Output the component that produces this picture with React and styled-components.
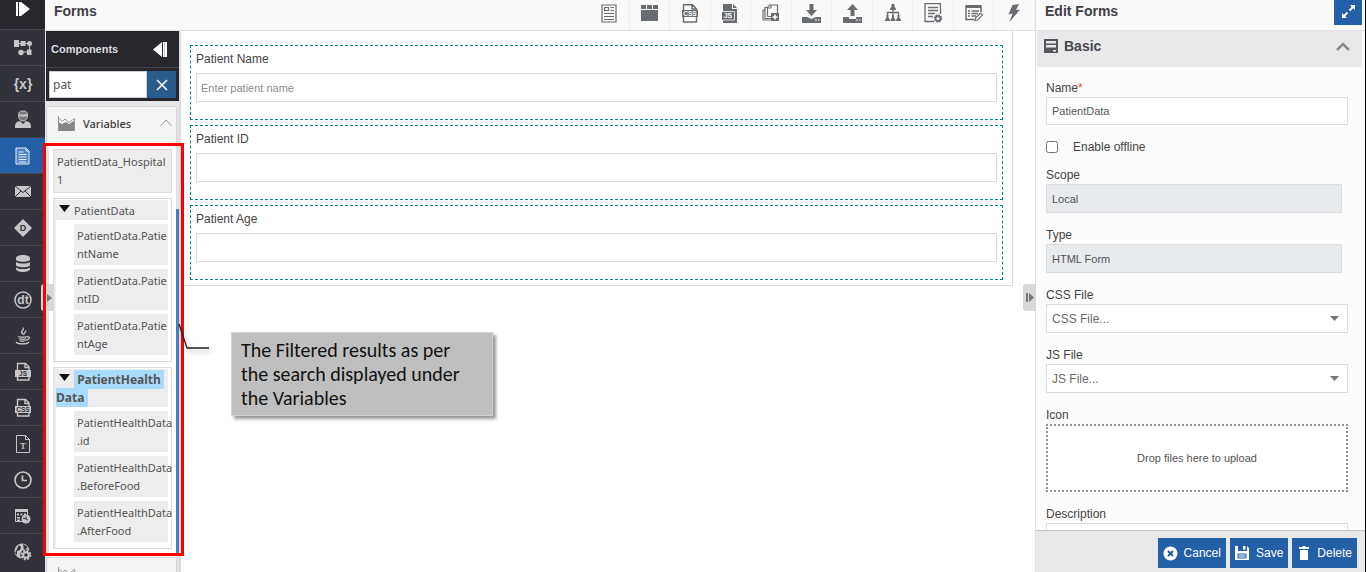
import { useState } from "react";
import styled, { createGlobalStyle, css } from "styled-components";

const GlobalStyle = createGlobalStyle`
  *, *::before, *::after {
    box-sizing: border-box;
  }

  body {
    margin: 0;
    overflow: hidden;
    background: #fff;
    color: #444;
    font-family: "Liberation Sans", Arial, sans-serif;
    font-size: 12px;
  }

  button, input, select {
    font-family: inherit;
    margin: 0;
  }
`;

const Page = styled.div`
  position: relative;
  display: flex;
  height: 100vh;
  overflow: hidden;
  border-right: 1px solid #000;
`;

/* Left rail */

const Rail = styled.nav`
  flex: none;
  width: 45px;
  background: #32323a;
`;

const RailButton = styled.button`
  display: flex;
  align-items: center;
  justify-content: center;
  width: 100%;
  height: 36px;
  padding: 0;
  border: 0;
  border-top: 1px solid #45454c;
  background: ${(props) => (props.$active ? "#2460a7" : "transparent")};
  color: #c6c6c8;
`;

const RailToggle = styled(RailButton)`
  height: 29px;
  padding-bottom: 12px;
  border-top: 0;
  background: #28272e;
  color: #fff;
`;

/* Middle */

const Main = styled.main`
  display: flex;
  flex: 1;
  flex-direction: column;
  min-width: 0;
`;

const Header = styled.header`
  display: flex;
  flex: none;
  justify-content: space-between;
  height: 31px;
  border-bottom: 1px solid #e2e2e4;
  background: #fafafa;
`;

const Title = styled.h1`
  margin: 0;
  padding: 3px 9px;
  font-size: 14px;
  line-height: 16px;
  color: #3f3f46;
`;

const Toolbar = styled.div`
  display: flex;
  width: 446px;
`;

const ToolButton = styled.button`
  display: flex;
  flex: 1;
  align-items: center;
  justify-content: center;
  padding: 0 0 4px;
  border: 0;
  border-right: 1px solid #f0f0f2;
  background: transparent;
  color: #696c71;
`;

const Workspace = styled.div`
  display: flex;
  flex: 1;
  min-height: 0;
`;

/* Components panel */

const Components = styled.aside`
  display: flex;
  flex: none;
  flex-direction: column;
  width: 136px;
  padding-left: 1px;
  border-right: 2px solid #dcdcdc;
  background: #e6e6e6;
`;

const PanelHead = styled.div`
  display: flex;
  flex: none;
  align-items: center;
  justify-content: space-between;
  height: 36px;
  padding: 0 12px 0 5px;
  background: #28272e;
  color: #dcdce0;
  font-size: 11px;
  font-weight: bold;
`;

const PlainButton = styled.button`
  display: flex;
  padding: 0;
  border: 0;
  background: transparent;
  color: inherit;
`;

const Search = styled.div`
  display: flex;
  flex: none;
  height: 34px;
  padding: 3px;
  border-top: 1px solid #45454c;
  background: #28272e;

  input {
    flex: 1;
    min-width: 0;
    padding: 0 3px;
    border: 1px solid #ccc;
    border-radius: 0;
    outline: 0;
    background: #fff;
    color: #555;
    font-family: "Noto Sans", sans-serif;
    font-size: 12px;
  }

  button {
    display: flex;
    align-items: center;
    justify-content: center;
    width: 29px;
    padding: 0;
    border: 0;
    background: #2b5d8c;
    color: #fff;
  }
`;

const Accordion = styled.div`
  position: relative;
  display: flex;
  flex: 1;
  flex-direction: column;
  min-height: 0;
  padding-top: 5px;
  overflow: hidden;
`;

const AccordionHead = styled.button`
  && {
    margin-right: 2px;
  }

  display: flex;
  flex: none;
  align-items: center;
  gap: 8px;
  height: 38px;
  padding: 0 4px 4px 11px;
  border: 1px solid #d5d5d5;
  border-radius: 2px;
  background: #f4f4f4;
  color: #3c3c3c;
  font-family: "Noto Sans", sans-serif;
  font-size: 11px;
  font-weight: 500;

  span {
    flex: 1;
    text-align: left;
  }
`;

const Results = styled.div`
  display: flex;
  flex: none;
  flex-direction: column;
  gap: 5px;
  margin-right: 2px;
  margin-left: 3px;
  padding: 5px 4px 8px;
  border-right: 1px solid #ddd;
  background: #fff;
  color: #555;
  font-family: "Noto Sans", sans-serif;
  font-size: 11px;
  line-height: 18px;
`;

const Variable = styled.div`
  padding: 3px;
  border: 1px solid #dcdcdc;
  background: #ededed;
  overflow-wrap: anywhere;
`;

const Group = styled.section`
  padding: 1px 3px 2px 2px;
  border: 1px solid #dcdcdc;
  background: linear-gradient(to right, #ededed 2px, #fff 2px);
`;

const GroupName = styled.div`
  padding: 2px 0 0;
  background: #ededed;

  svg {
    margin-right: 4px;
    margin-left: 3px;
    vertical-align: 3px;
  }
`;

const Mark = styled.mark`
  padding: 1px 4px 1px 0;
  background: #a9dbfd;
  color: #555;
  font-size: 12px;
  font-weight: bold;
  white-space: pre-wrap;
`;

const Child = styled.div`
  margin: 4px 0 4px 18px;
  padding: 3px 0 2px 3px;
  background: #ededed;
`;

const ScrollThumb = styled.div`
  position: absolute;
  top: 108px;
  right: 0;
  bottom: 17px;
  width: 3px;
  background: #4a7ebf;
`;

/* Form canvas */

const Canvas = styled.div`
  display: flex;
  flex: 1;
  flex-direction: column;
  align-self: flex-start;
  gap: 5px;
  margin-right: 22px;
  padding: 14px 9px 5px;
  border: 1px solid #dcdcdc;
  border-top: 0;
  border-left: 0;
`;

const FormField = styled.div`
  display: flex;
  flex-direction: column;
  height: 75px;
  padding: 5px;
  border: 1px dashed #0b858c;

  label {
    margin-bottom: 6px;
    line-height: 16px;
  }

  input {
    height: 29px;
    padding: 0 4px;
    border: 1px solid #dcdcdc;
    outline: 0;
    font-size: 11px;
  }

  input::placeholder {
    color: #8b8b8b;
  }
`;

/* Properties panel */

const Properties = styled.aside`
  display: flex;
  flex: none;
  flex-direction: column;
  width: 330px;
  border-left: 1px solid #dedee0;
  background: #fcfcfc;
`;

const ExpandButton = styled.button`
  && {
    margin-right: 3px;
  }

  display: flex;
  align-items: center;
  justify-content: center;
  width: 28px;
  height: 25px;
  padding: 0 0 3px;
  border: 0;
  background: #2460a7;
  color: #fff;
`;

const SectionHead = styled.button`
  && {
    margin: 0 3px 0 1px;
  }

  display: flex;
  flex: none;
  align-items: center;
  gap: 6px;
  height: 36px;
  padding: 0 12px 6px 7px;
  border: 0;
  background: #e9e9eb;
  color: #484850;
  font-size: 14px;
  font-weight: bold;

  span {
    flex: 1;
    text-align: left;
  }
`;

const Fields = styled.form`
  display: flex;
  flex: 1;
  flex-direction: column;
  gap: 14px;
  min-height: 0;
  padding: 13px 17px 0 10px;
  overflow: hidden;
`;

const controlStyle = css`
  width: 100%;
  height: 29px;
  border: 1px solid #dcdcde;
  border-radius: 0;
  outline: 0;
  color: #555;
`;

const Field = styled.div`
  flex: none;

  label {
    display: block;
    margin-bottom: 1px;
    line-height: 16px;
  }
`;

const Required = styled.span`
  color: #f33;
`;

const TextInput = styled.input`
  ${controlStyle}
  height: 28px;
  padding: 0 5px;
  background: #fff;
  font-size: 11px;
`;

const LockedField = styled(Field)`
  padding-right: 6px;

  input {
    height: 29px;
    background: #e8ebee;
  }
`;

const CheckRow = styled.div`
  display: flex;
  flex: none;
  align-items: center;
  gap: 15px;
  height: 16px;
  margin-bottom: -2px;

  input {
    width: 12px;
    height: 12px;
  }
`;

const SelectBox = styled.div`
  position: relative;

  select {
    ${controlStyle}
    padding: 0 5px;
    appearance: none;
    background: #fff;
    color: #6b6b6b;
    font-size: 12px;
  }

  svg {
    position: absolute;
    top: 12px;
    right: 9px;
    pointer-events: none;
  }
`;

const DropZone = styled.button`
  width: 100%;
  height: 68px;
  border: 2px dotted #929292;
  background: #fff;
  color: #555;
  font-size: 11px;
`;

const Footer = styled.footer`
  display: flex;
  flex: none;
  justify-content: flex-end;
  gap: 4px;
  height: 42px;
  padding: 7px 8px 0 0;
  border-top: 1px solid #c2c2c6;
  background: #e9e9eb;
`;

const ActionButton = styled.button`
  display: flex;
  align-items: center;
  gap: 6px;
  height: 30px;
  padding: 0 5px;
  border: 0;
  background: #2460a7;
  color: #fff;
  font-size: 12px;
`;

/* Things that lie over the page */

const Handle = styled.button`
  position: absolute;
  top: 284px;
  display: flex;
  align-items: center;
  justify-content: center;
  width: 13px;
  height: 27px;
  padding: 0;
  border: 0;
  border-radius: 3px 0 0 3px;
  background: #d8d8d8;
  color: #777;
  ${(props) =>
    props.$right ? "right: 329px;" : "left: 41px; padding-left: 4px;"}
`;

const Outline = styled.div`
  position: absolute;
  top: 143px;
  bottom: 16px;
  left: 43px;
  width: 141px;
  border: 3px solid #f00;
  pointer-events: none;
`;

const Leader = styled.svg`
  position: absolute;
  top: 322px;
  left: 178px;
  filter: drop-shadow(2px 3px 2px rgba(0, 0, 0, 0.3));
`;

const Callout = styled.p`
  position: absolute;
  top: 332px;
  left: 231px;
  width: 262px;
  margin: 0;
  padding: 5px 24px 5px 9px;
  border: 1px solid #d0d0d0;
  background: #bfbfbf;
  box-shadow: 3px 3px 3px rgba(0, 0, 0, 0.4);
  color: #111;
  font-family: Carlito, Lato, sans-serif;
  font-size: 20px;
  line-height: 24px;
`;

function Icon({ w = 18, h = w, children }) {
  return (
    <svg
      width={w}
      height={h}
      viewBox={`0 0 ${w} ${h}`}
      fill="currentColor"
      aria-hidden="true"
    >
      {children}
    </svg>
  );
}

function FileIcon({ text }) {
  return (
    <Icon w={16} h={20}>
      <path
        d="M2.500 8V1.500h8l3.500 3.500v3M2.500 14.500v3.500h11.500v-3.500M10 1.500V5.500h4"
        fill="none"
        stroke="currentColor"
        strokeWidth="1.400"
      />
      <path d="M0 8h16v7H0z" />
      <text
        x="8"
        y="14"
        textAnchor="middle"
        fontSize="6.500"
        fontWeight="bold"
        fill="#32323a"
      >
        {text}
      </text>
    </Icon>
  );
}

const railItems = [
  {
    name: "Workflow",
    icon: (
      <Icon w={18} h={16}>
        <path d="M0 0h5v7H0zM6.500 1h5v5h-5zM13 9.500h4.500V15H13z" />
        <circle cx="15.500" cy="3.500" r="2.500" />
        <circle cx="7" cy="12.500" r="2.700" />
        <path
          d="M4 3.500h11M15.500 4v8H7"
          fill="none"
          stroke="currentColor"
        />
      </Icon>
    ),
  },
  {
    name: "Variables",
    icon: (
      <Icon w={20} h={18}>
        <text x="10" y="14" textAnchor="middle" fontSize="14" fontWeight="bold">
          {"{x}"}
        </text>
      </Icon>
    ),
  },
  {
    name: "Users",
    icon: (
      <Icon w={18} h={19}>
        <path d="M1 18c0-5 1-6 5-7l3 3 3-3c4 1 5 2 5 7z" />
        <path
          d="M4.500 5.500C4.500 2 6 1 9 1s4.500 1 4.500 4.500S11.500 11 9 11 4.500 9 4.500 5.500z"
          fill="#77777c"
          stroke="currentColor"
        />
        <path d="M5 4c2 1 5 1 8 0v2c-3 1-6 1-8 0z" />
      </Icon>
    ),
  },
  {
    name: "Forms",
    active: true,
    icon: (
      <Icon w={16} h={18}>
        <path
          d="M1 1h10l3 3v13H1zM11 1v3h3M3.500 5h5M3.500 7.500h8M3.500 10h8M3.500 12.500h8M3.500 15h8"
          fill="#4d83c2"
          stroke="#e5edf7"
        />
      </Icon>
    ),
  },
  {
    name: "Email",
    icon: (
      <Icon w={16} h={11}>
        <path d="M0 0h16v11H0z" />
        <path
          d="M0 0l8 6.500L16 0M0 11l6-6M16 11l-6-6"
          fill="none"
          stroke="#32323a"
        />
      </Icon>
    ),
  },
  {
    name: "Decisions",
    icon: (
      <Icon w={18}>
        <path d="M9 0l9 9-9 9-9-9z" />
        <text
          x="9"
          y="12"
          textAnchor="middle"
          fontSize="9"
          fontWeight="bold"
          fill="#32323a"
        >
          D
        </text>
      </Icon>
    ),
  },
  {
    name: "Database",
    icon: (
      <Icon w={16} h={17}>
        <path d="M1 3c0-4 14-4 14 0v1.500c0 3-14 3-14 0zM1 7c3 2 11 2 14 0v3c0 3-14 3-14 0zM1 12.500c3 2 11 2 14 0V14c0 4-14 4-14 0z" />
      </Icon>
    ),
  },
  {
    name: "Data tables",
    icon: (
      <Icon w={18}>
        <circle
          cx="9"
          cy="9"
          r="8"
          fill="none"
          stroke="currentColor"
          strokeWidth="1.500"
        />
        <text x="9" y="13" textAnchor="middle" fontSize="12" fontWeight="bold">
          dt
        </text>
      </Icon>
    ),
  },
  {
    name: "Java",
    icon: (
      <Icon w={16} h={18}>
        <path
          d="M8 7C4 4.500 10 3.500 8 .5M9 8c-1.500-2 3-3 1.500-4.500M3 9.500c2 1 7 1 9 0M12 10c4-1 2.500 3-1 3M4 11.500c2 1 5 1 7 0M4.500 13.500c2 1 4 1 6 0M1 15c2 2.500 11 2.500 13 0"
          fill="none"
          stroke="currentColor"
          strokeWidth="1.300"
        />
      </Icon>
    ),
  },
  { name: "Script files", icon: <FileIcon text="JS" /> },
  { name: "Style files", icon: <FileIcon text="CSS" /> },
  {
    name: "Text files",
    icon: (
      <Icon w={14} h={18}>
        <path
          d="M.5.5h9l4 4v13H.5zM9.500.500v4h4"
          fill="none"
          stroke="currentColor"
        />
        <text
          x="7"
          y="14"
          textAnchor="middle"
          fontSize="9"
          fontWeight="bold"
          fontFamily="Liberation Serif"
        >
          T
        </text>
      </Icon>
    ),
  },
  {
    name: "Schedules",
    icon: (
      <Icon w={18}>
        <path
          d="M9 1a8 8 0 100 16A8 8 0 009 1zM8.500 4.500v5H13"
          fill="none"
          stroke="currentColor"
          strokeWidth="1.700"
        />
      </Icon>
    ),
  },
  {
    name: "Calendar",
    icon: (
      <Icon w={16} h={16}>
        <path
          d="M.5 1.500h12v12H.5z"
          fill="none"
          stroke="currentColor"
        />
        <path d="M0 1h13v3H0zM2 5.500h2v2H2zM5.500 5.500h2v2h-2zM9 5.500h2v2H9zM2 9h3v1.500H2zM2 11.500h3V13H2z" />
        <circle cx="11" cy="11" r="4.500" />
        <path d="M11 8.500V11l2 1M8 10l3 1" fill="none" stroke="#32323a" />
      </Icon>
    ),
  },
  {
    name: "Global settings",
    icon: (
      <Icon w={18} h={18}>
        <circle cx="8" cy="8" r="7.500" />
        <path d="M5 2l2 2-1 3-3 1v4l-2-2M9 1l5 3-4 3" fill="#32323a" />
        <circle cx="12" cy="12" r="5.800" fill="#32323a" />
        <circle
          cx="12"
          cy="12"
          r="4.300"
          fill="none"
          stroke="currentColor"
          strokeWidth="2"
          strokeDasharray="2 1.377"
        />
        <circle
          cx="12"
          cy="12"
          r="2.800"
          fill="none"
          stroke="currentColor"
          strokeWidth="2"
        />
      </Icon>
    ),
  },
];

const tools = [
  {
    name: "Layout",
    icon: (
      <Icon w={16} h={19}>
        <path
          d="M1 1h14v17H1zM3.500 3.500h4v3h-4zM9.500 3.500H13M9.500 6.500H13M3 9.500h10M3 12.500h10M3 15.500h10"
          fill="none"
          stroke="currentColor"
          strokeWidth="1.200"
        />
      </Icon>
    ),
  },
  {
    name: "Containers",
    icon: (
      <Icon w={17} h={16}>
        <path d="M0 5h17v11H0zM0 0h5v4H0zM6 0h5v4H6zM12 0h5v4h-5z" />
      </Icon>
    ),
  },
  {
    name: "CSS",
    icon: (
      <Icon w={16} h={19}>
        <path
          d="M1.500 6V.7h9L14.500 5v2M1.500 13v5h13v-5M10 1v4h4"
          fill="none"
          stroke="currentColor"
          strokeWidth="1.400"
        />
        <path d="M0 6h16v7H0z" />
        <text
          x="8"
          y="12"
          textAnchor="middle"
          fontSize="6.500"
          fontWeight="bold"
          fill="#fff"
        >
          CSS
        </text>
      </Icon>
    ),
  },
  {
    name: "JavaScript",
    icon: (
      <Icon w={16} h={19}>
        <path d="M1 0h9v5h5v14H1v-3h10V8H1zM11 0l4 4h-4z" />
        <path d="M0 8h12v8H0z" />
        <path
          d="M1 7.500h11.500v8.500H1"
          fill="none"
          stroke="#fafafa"
          strokeWidth=".8"
        />
        <text
          x="6"
          y="14"
          textAnchor="middle"
          fontSize="7"
          fontWeight="bold"
          fill="#fff"
        >
          JS
        </text>
      </Icon>
    ),
  },
  {
    name: "Add page",
    icon: (
      <Icon w={18} h={18}>
        <path
          d="M5.500 12.500v-9l2-2.500h8v8M5 3.500H3v11h8M3 6H1v10h9M5.500 12.500h5M6 4h3V1"
          fill="none"
          stroke="currentColor"
          strokeWidth="1.200"
        />
        <path d="M9 9h8v8H9z" />
        <path d="M13 10.500v5M10.500 13h5" stroke="#fff" strokeWidth="1.500" />
      </Icon>
    ),
  },
  {
    name: "Import",
    icon: (
      <Icon w={19} h={19}>
        <path d="M7.500 0h4v6h3.500l-5.500 6L4 6h3.500zM0 13h5l4.500 2 4.500-2h5v6H0z" />
        <path d="M13 16h2M16 16h1.500" stroke="#fff" />
      </Icon>
    ),
  },
  {
    name: "Export",
    icon: (
      <Icon w={19} h={19}>
        <path d="M7.500 12h4V6H15L9.500 0 4 6h3.500zM0 13h6v2h7v-2h6v6H0z" />
        <path d="M13 16h2M16 16h1.500" stroke="#fff" />
      </Icon>
    ),
  },
  {
    name: "Hierarchy",
    icon: (
      <Icon w={16} h={18}>
        <path d="M6.500 0h3v2.500L11 5v1H5V5l1.500-2.500zM1.500 11h2v2.500L5 16v1H0v-1l1.500-2.500zM7 11h2v2.500l1.500 2.500v1h-5v-1L7 13.500zM12.500 11h2v2.500L16 16v1h-5v-1l1.500-2.500z" />
        <path
          d="M8 5v7M2.500 12V8.500h11V12"
          fill="none"
          stroke="currentColor"
          strokeWidth="1.300"
        />
      </Icon>
    ),
  },
  {
    name: "Form settings",
    icon: (
      <Icon w={19} h={20}>
        <path
          d="M10 18.500H1V.7h15.500V11M4 4.500h10M4 7.500h10M4 10.500h7M4 13.500h5"
          fill="none"
          stroke="currentColor"
          strokeWidth="1.300"
        />
        <circle
          cx="14"
          cy="15.500"
          r="2.500"
          fill="none"
          stroke="currentColor"
          strokeWidth="1.800"
        />
        <circle
          cx="14"
          cy="15.500"
          r="3.700"
          fill="none"
          stroke="currentColor"
          strokeWidth="1.200"
          strokeDasharray="1.500 1.400"
        />
      </Icon>
    ),
  },
  {
    name: "Edit rules",
    icon: (
      <Icon w={18} h={17}>
        <path
          d="M9 14.500H1V1h15v6M3 6h2M6.500 6H14M3 8.500h2M6.500 8.500H13M3 11h2M6.500 11H11"
          fill="none"
          stroke="currentColor"
          strokeWidth="1.500"
        />
        <path d="M1 0h15v3H1z" />
        <path
          d="M10 15.500l.5-2.500 5-5 2 2-5 5z"
          fill="#fafafa"
          stroke="currentColor"
          strokeWidth="1.200"
        />
      </Icon>
    ),
  },
  {
    name: "Events",
    icon: (
      <Icon w={12} h={18}>
        <path d="M4.500 1L11 0 8 6l4-.5L1.500 18l3-8.500-4 1z" />
      </Icon>
    ),
  },
];

const groups = [
  {
    name: "PatientData",
    children: [
      ["PatientData.Patie", "ntName"],
      ["PatientData.Patie", "ntID"],
      ["PatientData.Patie", "ntAge"],
    ],
  },
  {
    name: "PatientHealth Data",
    highlighted: true,
    children: [
      ["PatientHealthData", ".id"],
      ["PatientHealthData", ".BeforeFood"],
      ["PatientHealthData", ".AfterFood"],
    ],
  },
];

const formFields = [
  { id: "patient-name", label: "Patient Name", hint: "Enter patient name" },
  { id: "patient-id", label: "Patient ID" },
  { id: "patient-age", label: "Patient Age" },
];

function ChartIcon() {
  return (
    <Icon w={17} h={15}>
      <path d="M0 15V6l4 2 4-2 3 2 5-3 1 0v10z" fill="#858585" />
      <path
        d="M.5 15V0M.5 2l4 3.500L7 3l4 3.500 5.500-4V15"
        fill="none"
        stroke="#999"
      />
    </Icon>
  );
}

function VariableGroup({ group }) {
  return (
    <Group>
      <GroupName>
        <Icon w={11} h={7}>
          <path d="M0 0h11L5.500 7z" fill="#111" />
        </Icon>
        {group.highlighted ? <Mark> {group.name}</Mark> : group.name}
      </GroupName>
      {group.children.map(([first, rest]) => (
        <Child key={rest}>
          {first}
          <br />
          {rest}
        </Child>
      ))}
    </Group>
  );
}

function ComponentsPanel() {
  const [query, setQuery] = useState("pat");

  return (
    <Components>
      <PanelHead>
        Components
        <PlainButton aria-label="Collapse components">
          <Icon w={14} h={15}>
            <path d="M9 0v15L0 7.500zM10 0h4v15h-4z" fill="#fff" />
            <path d="M11.500 0v15" stroke="#8d8d92" strokeWidth=".5" />
          </Icon>
        </PlainButton>
      </PanelHead>
      <Search>
        <input
          aria-label="Search components"
          value={query}
          onChange={(e) => setQuery(e.target.value)}
        />
        <button aria-label="Clear search" onClick={() => setQuery("")}>
          <Icon w={12}>
            <path d="M1 1l10 10M11 1L1 11" stroke="#fff" strokeWidth="1.500" />
          </Icon>
        </button>
      </Search>
      <Accordion>
        <AccordionHead>
          <ChartIcon />
          <span>Variables</span>
          <Icon w={12} h={8}>
            <path d="M.5 7L6 1l5.500 6" fill="none" stroke="#999" />
          </Icon>
        </AccordionHead>
        <Results>
          <Variable>PatientData_Hospital1</Variable>
          {groups.map((group) => (
            <VariableGroup key={group.name} group={group} />
          ))}
        </Results>
        <AccordionHead aria-label="More components">
          <ChartIcon />
        </AccordionHead>
        <ScrollThumb />
      </Accordion>
    </Components>
  );
}

function SelectField({ id, label }) {
  return (
    <Field>
      <label htmlFor={id}>{label}</label>
      <SelectBox>
        <select id={id}>
          <option>{label}...</option>
        </select>
        <Icon w={9} h={5}>
          <path d="M0 0h9L4.500 5z" fill="#777" />
        </Icon>
      </SelectBox>
    </Field>
  );
}

function PropertiesPanel() {
  return (
    <Properties>
      <Header>
        <Title as="h2">Edit Forms</Title>
        <ExpandButton aria-label="Expand panel">
          <Icon w={13} h={13}>
            <path d="M8 0h5v5zM0 8v5h5z" />
            <path
              d="M2 11l3.500-3.500M7.500 5.500L11 2"
              stroke="#fff"
              strokeWidth="2"
            />
          </Icon>
        </ExpandButton>
      </Header>
      <SectionHead>
        <Icon w={14} h={14}>
          <path d="M0 0h14v14H0z" fill="#55585d" />
          <path
            d="M2 2h10v2.500H2zM2 6h10v2.500H2zM9 11h3v1.500H9z"
            fill="#e9e9eb"
          />
        </Icon>
        <span>Basic</span>
        <Icon w={14} h={9}>
          <path d="M1 8l6-6 6 6" fill="none" stroke="#888" strokeWidth="2.500" />
        </Icon>
      </SectionHead>
      <Fields>
        <Field>
          <label htmlFor="name">
            Name<Required>*</Required>
          </label>
          <TextInput id="name" defaultValue="PatientData" />
        </Field>
        <CheckRow>
          <input id="offline" type="checkbox" />
          <label htmlFor="offline">Enable offline</label>
        </CheckRow>
        <LockedField>
          <label htmlFor="scope">Scope</label>
          <TextInput id="scope" value="Local" readOnly />
        </LockedField>
        <LockedField>
          <label htmlFor="type">Type</label>
          <TextInput id="type" value="HTML Form" readOnly />
        </LockedField>
        <SelectField id="css-file" label="CSS File" />
        <SelectField id="js-file" label="JS File" />
        <Field>
          <label htmlFor="icon">Icon</label>
          <DropZone id="icon" type="button">
            Drop files here to upload
          </DropZone>
        </Field>
        <Field>
          <label htmlFor="description">Description</label>
          <TextInput id="description" />
        </Field>
      </Fields>
      <Footer>
        <ActionButton>
          <Icon w={15}>
            <circle cx="7.500" cy="7.500" r="7" />
            <path d="M5 5l5 5M10 5l-5 5" stroke="#2460a7" strokeWidth="2" />
          </Icon>
          Cancel
        </ActionButton>
        <ActionButton>
          <Icon w={15} h={14}>
            <path d="M0 0h3v5h9V0l2 2v12H0zM8 0h2.500v3.500H8z" />
            <path d="M2.500 7.500h9v5h-9z" fill="#2460a7" />
            <path d="M3.500 9h7M3.500 11h7" stroke="#fff" />
          </Icon>
          Save
        </ActionButton>
        <ActionButton>
          <Icon w={14} h={14}>
            <path d="M2 1h3.500V0h3v1H12v2H2zM3 4h8v10H3z" />
          </Icon>
          Delete
        </ActionButton>
      </Footer>
    </Properties>
  );
}

function App() {
  return (
    <>
      <GlobalStyle />
      <Page>
        <Rail>
          <RailToggle aria-label="Toggle menu">
            <Icon w={14} h={14}>
              <path d="M0 0h2v14H0zM3 0h2l9 7-9 7H3z" />
            </Icon>
          </RailToggle>
          {railItems.map((item) => (
            <RailButton
              key={item.name}
              aria-label={item.name}
              $active={item.active}
            >
              {item.icon}
            </RailButton>
          ))}
        </Rail>
        <Main>
          <Header>
            <Title>Forms</Title>
            <Toolbar>
              {tools.map((tool) => (
                <ToolButton key={tool.name} aria-label={tool.name}>
                  {tool.icon}
                </ToolButton>
              ))}
            </Toolbar>
          </Header>
          <Workspace>
            <ComponentsPanel />
            <Canvas>
              {formFields.map((field) => (
                <FormField key={field.id}>
                  <label htmlFor={field.id}>{field.label}</label>
                  <input id={field.id} placeholder={field.hint} />
                </FormField>
              ))}
            </Canvas>
          </Workspace>
        </Main>
        <PropertiesPanel />
        <Handle aria-label="Resize components">
          <Icon w={5} h={8}>
            <path d="M0 0l5 4-5 4z" />
          </Icon>
        </Handle>
        <Handle $right aria-label="Collapse properties">
          <Icon w={8} h={9}>
            <path d="M0 0h2v9H0zM3 0l5 4.500L3 9z" />
          </Icon>
        </Handle>
        <Outline />
        <Leader width="34" height="30" aria-hidden="true">
          <path d="M1 2l8 24h22" fill="none" stroke="#222" strokeWidth="1.300" />
        </Leader>
        <Callout>
          The Filtered results as per the search displayed under the Variables
        </Callout>
      </Page>
    </>
  );
}

export default App;
